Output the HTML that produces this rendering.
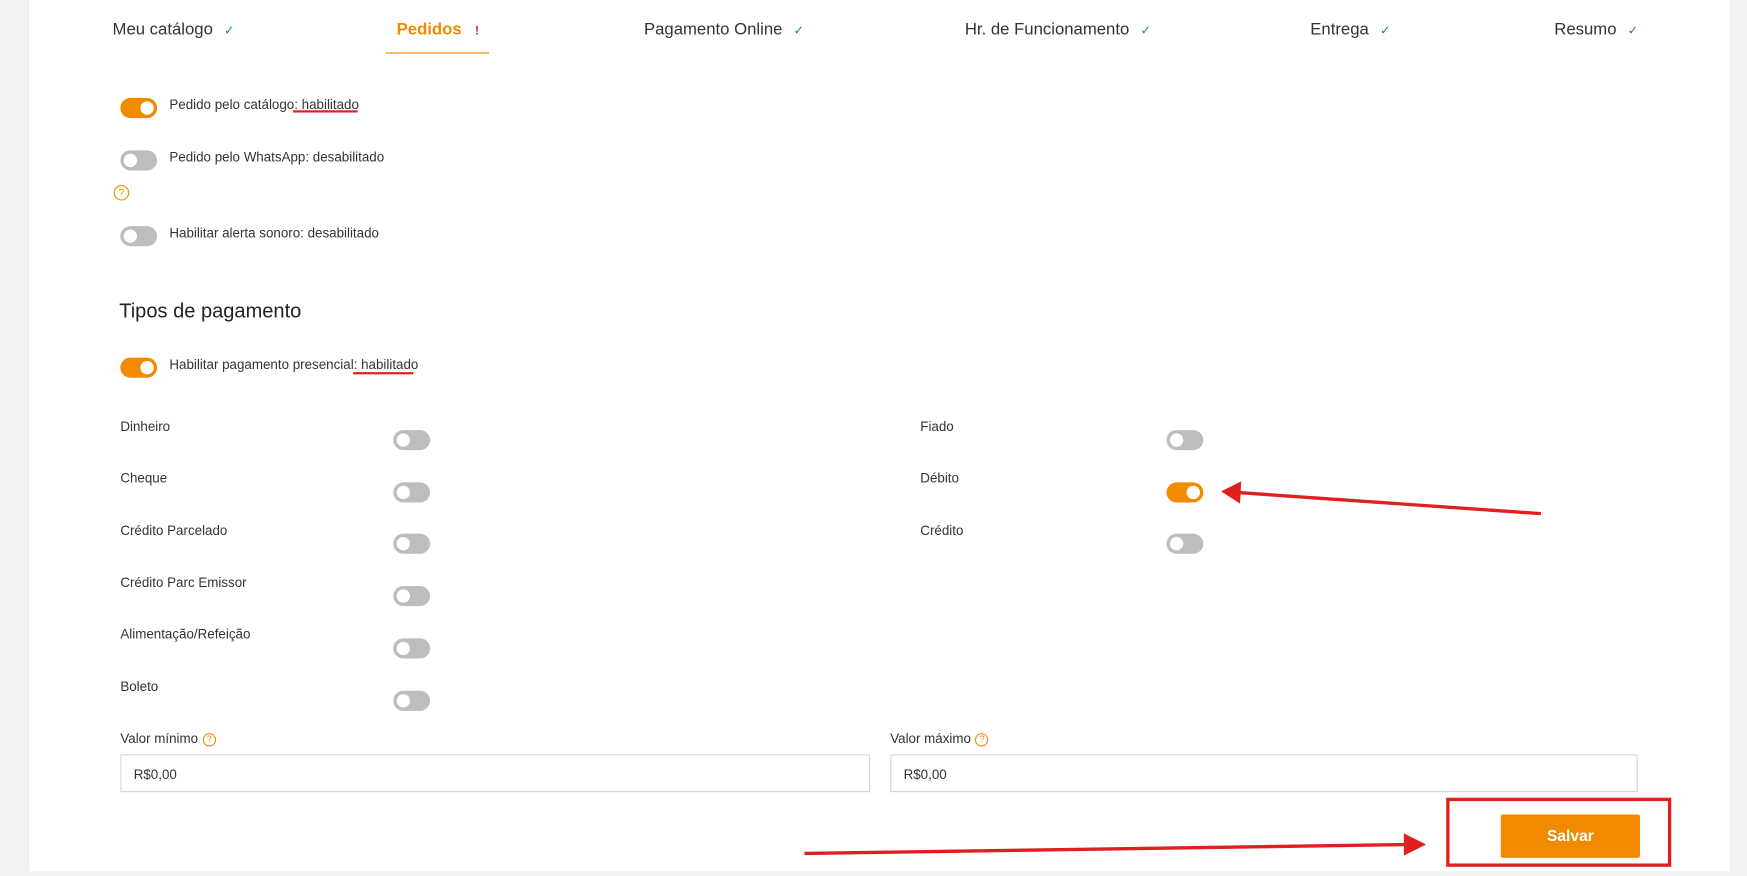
<!DOCTYPE html>
<html><head><meta charset="utf-8"><style>
html,body{margin:0;padding:0;width:1747px;height:876px;overflow:hidden;background:#f2f2f2}
#w{position:absolute;left:0;top:0;width:1568px;height:786px;transform:scale(1.11416);transform-origin:0 0;font-family:"Liberation Sans",sans-serif;color:#333}
.a{position:absolute}
.pg{position:absolute;left:26px;top:0;width:1526px;height:782px;background:#fff}
.tab{position:absolute;top:18px;font-size:15px;color:#333}
.ck{color:#1a9a2a;font-size:11px;margin-left:10px}
.tg{position:absolute;width:33px;height:18px;border-radius:9px;background:#bdbdbd}
.tg:after{content:"";position:absolute;left:3px;top:3px;width:12px;height:12px;border-radius:50%;background:#fff}
.tg.on{background:#f28a00}.tg.on:after{left:18px}
.t{position:absolute;font-size:12px;color:#333}
.q{display:inline-block;width:10px;height:10px;border:1px solid #f28a00;border-radius:50%;color:#f28a00;font-size:8px;line-height:10px;text-align:center;vertical-align:1px;margin-left:4px}
.in{position:absolute;height:34px;border:1px solid #d6d6d6;box-sizing:border-box;font-size:12px;line-height:34px;padding-left:11px}
.ul{position:absolute;height:2px;background:#e02020}
</style></head><body><div id="w">
<div class="pg"></div>
<div class="tab" style="left:101px">Meu catálogo<span class="ck">✓</span></div>
<div class="tab" style="left:356px;color:#f28a00;font-weight:bold">Pedidos<span style="color:#e02020;font-size:11px;margin-left:12px">!</span></div>
<div class="a" style="left:346px;top:47px;width:93px;height:1px;background:#f28a00"></div>
<div class="tab" style="left:578px">Pagamento Online<span class="ck">✓</span></div>
<div class="tab" style="left:866px">Hr. de Funcionamento<span class="ck">✓</span></div>
<div class="tab" style="left:1176px">Entrega<span class="ck">✓</span></div>
<div class="tab" style="left:1395px">Resumo<span class="ck">✓</span></div>

<div class="tg on" style="left:108px;top:88px"></div><div class="t" style="left:152px;top:87px">Pedido pelo catálogo: habilitado</div>
<div class="ul" style="left:263px;top:99px;width:58px"></div>
<div class="tg" style="left:108px;top:135px"></div><div class="t" style="left:152px;top:134px">Pedido pelo WhatsApp: desabilitado</div>
<div class="a" style="left:102px;top:164px"><span class="q" style="margin:0;width:12px;height:12px;line-height:12px;font-size:9px">?</span></div>
<div class="tg" style="left:108px;top:203px"></div><div class="t" style="left:152px;top:202px">Habilitar alerta sonoro: desabilitado</div>

<div class="a" style="left:107px;top:269px;font-size:18px;color:#222">Tipos de pagamento</div>
<div class="tg on" style="left:108px;top:321px"></div><div class="t" style="left:152px;top:320px">Habilitar pagamento presencial: habilitado</div>
<div class="ul" style="left:317px;top:334px;width:54px"></div>

<div class="t" style="left:108px;top:376px">Dinheiro</div><div class="tg" style="left:353px;top:386px"></div>
<div class="t" style="left:108px;top:422px">Cheque</div><div class="tg" style="left:353px;top:433px"></div>
<div class="t" style="left:108px;top:469px">Crédito Parcelado</div><div class="tg" style="left:353px;top:479px"></div>
<div class="t" style="left:108px;top:516px">Crédito Parc Emissor</div><div class="tg" style="left:353px;top:526px"></div>
<div class="t" style="left:108px;top:562px">Alimentação/Refeição</div><div class="tg" style="left:353px;top:573px"></div>
<div class="t" style="left:108px;top:609px">Boleto</div><div class="tg" style="left:353px;top:620px"></div>

<div class="t" style="left:826px;top:376px">Fiado</div><div class="tg" style="left:1047px;top:386px"></div>
<div class="t" style="left:826px;top:422px">Débito</div><div class="tg on" style="left:1047px;top:433px"></div>
<div class="t" style="left:826px;top:469px">Crédito</div><div class="tg" style="left:1047px;top:479px"></div>

<div class="t" style="left:108px;top:656px">Valor mínimo<span class="q">?</span></div>
<div class="t" style="left:799px;top:656px">Valor máximo<span class="q">?</span></div>
<div class="in" style="left:108px;top:677px;width:673px">R$0,00</div>
<div class="in" style="left:799px;top:677px;width:671px">R$0,00</div>

<div class="a" style="left:1298px;top:716px;width:202px;height:62px;border:3px solid #e02020;box-sizing:border-box"></div>
<div class="a" style="left:1347px;top:731px;width:125px;height:39px;background:#f28a00;border-radius:2px;color:#fff;font-weight:bold;font-size:14px;line-height:39px;text-align:center">Salvar</div>

<svg class="a" style="left:0;top:0" width="1568" height="786">
<line x1="1383" y1="461" x2="1110" y2="442" stroke="#e02020" stroke-width="3"/>
<polygon points="1096,441 1114,432 1113,452" fill="#e02020"/>
<line x1="722" y1="766" x2="1262" y2="758" stroke="#e02020" stroke-width="3"/>
<polygon points="1280,758 1260,748 1260,768" fill="#e02020"/>
</svg>
</div></body></html>
